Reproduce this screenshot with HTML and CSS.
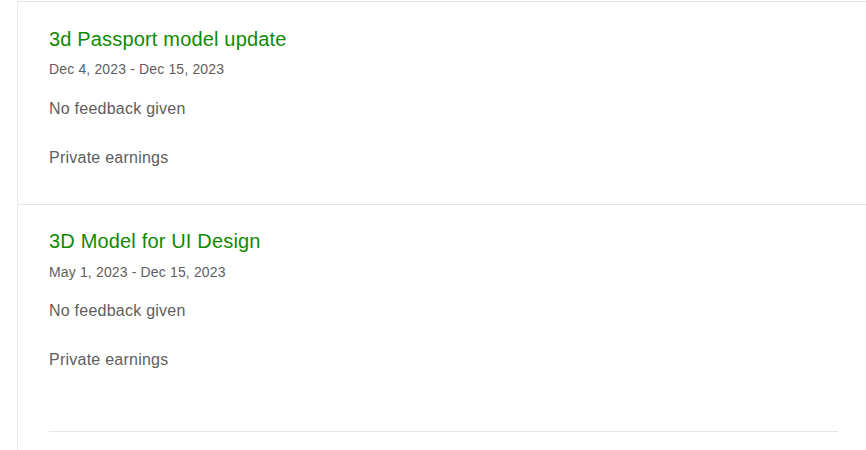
FILE: index.html
```html
<!DOCTYPE html>
<html>
<head>
<meta charset="utf-8">
<link rel="stylesheet" href="styles.css">
</head>
<body>
<div class="panel">
  <div class="job">
    <a class="job-title" href="#">3d Passport model update</a>
    <div class="job-dates">Dec 4, 2023 - Dec 15, 2023</div>
    <div class="job-feedback">No feedback given</div>
    <div class="job-earnings">Private earnings</div>
  </div>
  <div class="job job-last">
    <a class="job-title" href="#">3D Model for UI Design</a>
    <div class="job-dates">May 1, 2023 - Dec 15, 2023</div>
    <div class="job-feedback">No feedback given</div>
    <div class="job-earnings">Private earnings</div>
  </div>
  <div class="panel-footer"><hr class="rule"></div>
</div>
</body>
</html>
```
FILE: styles.css
```css
html, body {
  margin: 0;
  padding: 0;
  background: #ffffff;
}
body {
  font-family: "Liberation Sans", Arial, sans-serif;
  color: #5e5e5e;
  overflow: hidden;
}
.panel {
  margin: 1px 0 0 17px;
  width: 852px;
  border-left: 1px solid #ececec;
  border-top: 1px solid #e6e6e6;
  min-height: 460px;
}
.job {
  padding: 23px 32px 35px 31px;
  border-bottom: 1px solid #e6e6e6;
  display: flex;
  flex-direction: column;
  align-items: flex-start;
}
.job-last {
  padding-top: 22px;
  border-bottom: none;
  padding-bottom: 0;
}
.job-title {
  color: #108a00;
  text-decoration: none;
  font-size: 20px;
  line-height: 28px;
  letter-spacing: 0.17px;
}
.job-dates {
  margin-top: 6px;
  font-size: 14px;
  line-height: 20px;
  letter-spacing: 0.15px;
}
.job-last .job-dates {
  margin-top: 7px;
}
.job-feedback {
  margin-top: 19px;
  font-size: 16px;
  line-height: 22px;
  letter-spacing: 0.24px;
}
.job-last .job-feedback {
  margin-top: 18px;
}
.job-earnings {
  margin-top: 27px;
  font-size: 16px;
  line-height: 22px;
  letter-spacing: 0.24px;
}
.panel-footer {
  padding: 60px 32px 0 31px;
}
.rule {
  margin: 0;
  border: none;
  border-top: 1px solid #e6e6e6;
}
```
